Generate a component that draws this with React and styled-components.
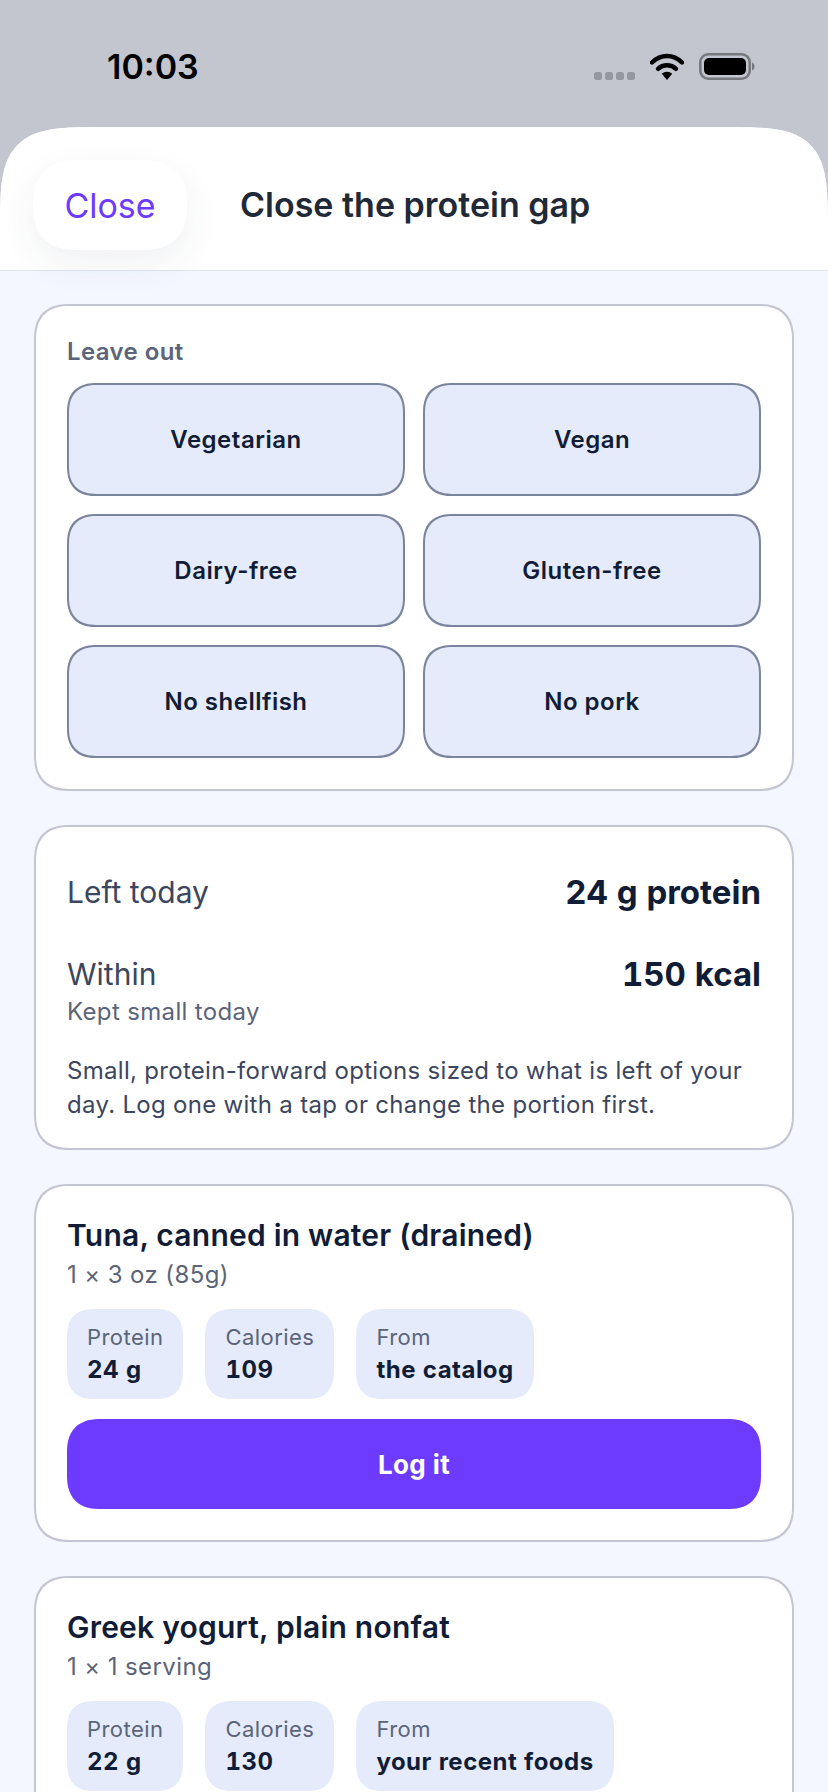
import React from "react";
import styled, { createGlobalStyle } from "styled-components";

const GlobalStyle = createGlobalStyle`
  html, body {
    margin: 0;
    padding: 0;
    background: #f4f7ff;
    font-family: Inter, "Liberation Sans", sans-serif;
  }
`;

const allergyChips = ["Vegetarian", "Vegan", "Dairy-free", "Gluten-free", "No shellfish", "No pork"];

// the second card runs off the bottom of the screen before its button
const foods = [
  { name: "Tuna, canned in water (drained)", serving: "1 × 3 oz (85g)", protein: "24 g", calories: "109", from: "the catalog", action: "Log it" },
  { name: "Greek yogurt, plain nonfat", serving: "1 × 1 serving", protein: "22 g", calories: "130", from: "your recent foods" },
];

const App = () => {
  return (
    <>
      <GlobalStyle />
      <Screen>
        <StatusBar>
          <Time>10:03</Time>
          <StatusIcons>
            <SignalDots>
              <i /><i /><i /><i />
            </SignalDots>
            <svg width="34" height="27" viewBox="0 0 34 27" fill="none">
              <path d="M2 9.500C6.300 5.300 11.300 3 17 3s10.700 2.300 15 6.500" stroke="#000" strokeWidth="4.400" strokeLinecap="round" />
              <path d="M8 15.800C10.400 13.500 13.500 12.200 17 12.200s6.600 1.300 9 3.600" stroke="#000" strokeWidth="4.400" strokeLinecap="round" />
              <path d="M11.800 20.800C13.200 19.500 15 18.800 17 18.800s3.800.7 5.200 2L17 27z" fill="#000" />
            </svg>
            <svg width="56" height="27" viewBox="0 0 56 27" fill="none">
              <rect x="1.300" y="1.300" width="49.400" height="24.400" rx="8" stroke="#77797f" strokeWidth="2.600" />
              <rect x="5" y="5" width="42" height="17" rx="5" fill="#000" />
              <path d="M53 9.500c1.700.6 2.500 2.200 2.500 4s-.8 3.400-2.500 4z" fill="#77797f" />
            </svg>
          </StatusIcons>
        </StatusBar>
        <Sheet>
          <SheetHeader>
            <CloseButton>Close</CloseButton>
            <SheetTitle>Close the protein gap</SheetTitle>
          </SheetHeader>
          <Content>
            <Card>
              <FieldLabel>Leave out</FieldLabel>
              <ChipGrid>
                {allergyChips.map((chip) => (
                  <Chip key={chip}>{chip}</Chip>
                ))}
              </ChipGrid>
            </Card>
            <SummaryCard>
              <SummaryRow>
                <SummaryLabel>Left today</SummaryLabel>
                <SummaryValue>24 g protein</SummaryValue>
              </SummaryRow>
              <SummaryRow $top={46}>
                <div>
                  <SummaryLabel>Within</SummaryLabel>
                  <SummaryHint>Kept small today</SummaryHint>
                </div>
                <SummaryValue>150 kcal</SummaryValue>
              </SummaryRow>
              <SummaryText>
                Small, protein-forward options sized to what is left of your day. Log one with a tap or change the portion first.
              </SummaryText>
            </SummaryCard>
            {foods.map((food) => (
              <FoodCard key={food.name}>
                <FoodName>{food.name}</FoodName>
                <FoodServing>{food.serving}</FoodServing>
                <StatRow>
                  <Stat>
                    <StatLabel>Protein</StatLabel>
                    <StatValue>{food.protein}</StatValue>
                  </Stat>
                  <Stat>
                    <StatLabel>Calories</StatLabel>
                    <StatValue>{food.calories}</StatValue>
                  </Stat>
                  <Stat>
                    <StatLabel>From</StatLabel>
                    <StatValue>{food.from}</StatValue>
                  </Stat>
                </StatRow>
                {food.action && <LogButton>{food.action}</LogButton>}
              </FoodCard>
            ))}
          </Content>
        </Sheet>
      </Screen>
    </>
  );
};

export default App;

const Screen = styled.div`
  width: 828px;
  height: 1792px;
  overflow: hidden;
  background: #c3c6ce;
`;

const StatusBar = styled.div`
  height: 127px;
  box-sizing: border-box;
  display: flex;
  align-items: flex-start;
  justify-content: space-between;
  padding: 46px 73px 0 107px;
`;

const Time = styled.div`
  font-size: 34px;
  line-height: 42px;
  font-weight: 600;
  color: #000;
`;

const StatusIcons = styled.div`
  display: flex;
  align-items: flex-end;
  gap: 15px;
  height: 27px;
  margin-top: 7px;
`;

const SignalDots = styled.div`
  display: flex;
  gap: 3px;

  i {
    display: block;
    width: 8px;
    height: 8px;
    border-radius: 2.500px;
    background: #94979d;
  }
`;

const Sheet = styled.div`
  background: #f4f7ff;
  border-radius: 112px 112px 0 0;
  corner-shape: squircle;
  overflow: hidden;
  height: 1665px;
`;

const SheetHeader = styled.div`
  height: 144px;
  box-sizing: border-box;
  background: #fff;
  border-bottom: 1px solid #e1e4ec;
  display: flex;
  align-items: flex-start;
  padding: 33px 0 0 33px;
  gap: 53px;
`;

const CloseButton = styled.button`
  width: 154px;
  height: 90px;
  border: none;
  border-radius: 45px;
  corner-shape: superellipse(1.3);
  background: #fff;
  box-shadow: 0 14px 36px rgba(40, 50, 80, 0.07);
  color: #6d3bff;
  font-family: inherit;
  font-size: 34px;
  font-weight: 400;
  padding: 0;
`;

const SheetTitle = styled.div`
  font-size: 34px;
  line-height: 90px;
  font-weight: 600;
  color: #1f2937;
`;

const Content = styled.div`
  display: flex;
  flex-direction: column;
  gap: 34px;
  padding: 33px 34px 0;
`;

const Card = styled.div`
  background: #fff;
  border: 2px solid #c3c6d2;
  border-radius: 36px;
  corner-shape: superellipse(1.3);
  padding: 31px;
`;

const SummaryCard = styled(Card)`
  padding-top: 47px;
  padding-bottom: 26px;
`;

const FoodCard = styled(Card)`
  padding-top: 30px;
`;

const FieldLabel = styled.div`
  font-size: 24px;
  line-height: 30px;
  font-weight: 600;
  letter-spacing: 0.4px;
  color: #5b6479;
  margin-bottom: 16px;
`;

const ChipGrid = styled.div`
  display: grid;
  grid-template-columns: 1fr 1fr;
  gap: 18px;
`;

const Chip = styled.div`
  height: 113px;
  box-sizing: border-box;
  display: flex;
  align-items: center;
  justify-content: center;
  background: #e5ebfa;
  border: 2px solid #7a849c;
  border-radius: 30px;
  corner-shape: superellipse(1.3);
  font-size: 24px;
  font-weight: 600;
  letter-spacing: 0.5px;
  color: #111c36;
`;

const SummaryRow = styled.div`
  display: flex;
  justify-content: space-between;
  align-items: flex-start;
  margin-top: ${(props) => props.$top || 0}px;
`;

const SummaryLabel = styled.div`
  font-size: 30px;
  line-height: 36px;
  color: #3c465e;
`;

const SummaryValue = styled.div`
  font-size: 33px;
  line-height: 36px;
  font-weight: 700;
  font-variant-numeric: tabular-nums;
  color: #111c36;
`;

const SummaryHint = styled.div`
  font-size: 24px;
  line-height: 32px;
  letter-spacing: 0.35px;
  color: #5b6479;
  margin-top: 4px;
`;

const SummaryText = styled.div`
  font-size: 24px;
  line-height: 34px;
  letter-spacing: 0.3px;
  color: #3c465e;
  margin-top: 26px;
`;

const FoodName = styled.div`
  font-size: 30px;
  line-height: 38px;
  font-weight: 600;
  letter-spacing: 0.22px;
  color: #111c36;
`;

const FoodServing = styled.div`
  font-size: 24px;
  line-height: 32px;
  letter-spacing: 0.4px;
  color: #5b6479;
  margin-top: 5px;
`;

const StatRow = styled.div`
  display: flex;
  gap: 22px;
  margin-top: 18px;
`;

const Stat = styled.div`
  height: 90px;
  box-sizing: border-box;
  padding: 13px 20px;
  background: #e5ebfa;
  border-radius: 28px;
  corner-shape: superellipse(1.3);
`;

const StatLabel = styled.div`
  font-size: 22px;
  line-height: 30px;
  letter-spacing: 0.45px;
  color: #5b6479;
`;

const StatValue = styled.div`
  font-size: 24px;
  line-height: 32px;
  font-weight: 700;
  letter-spacing: 0.48px;
  font-variant-numeric: tabular-nums;
  color: #111c36;
  margin-top: 2px;
`;

const LogButton = styled.button`
  display: block;
  width: 100%;
  height: 90px;
  margin-top: 20px;
  border: none;
  border-radius: 34px;
  corner-shape: superellipse(1.3);
  background: #6d3bff;
  color: #fff;
  font-family: inherit;
  font-size: 26px;
  font-weight: 700;
  letter-spacing: 0.4px;
`;
